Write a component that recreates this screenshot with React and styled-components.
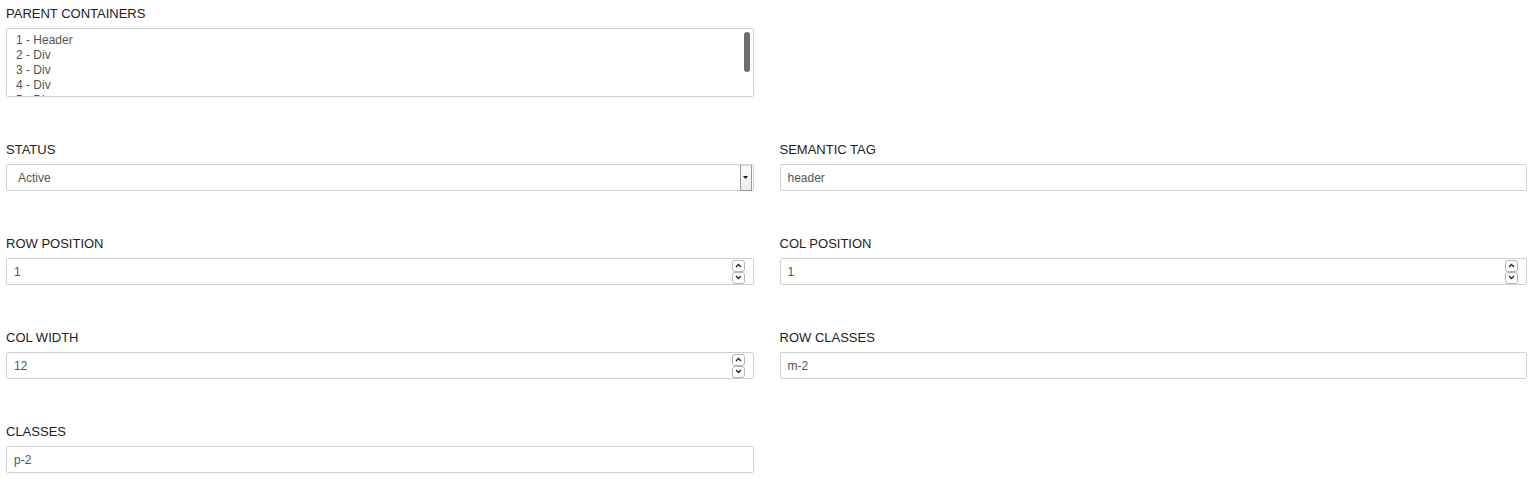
import React from 'react'
import styled, { createGlobalStyle } from 'styled-components'

const GlobalStyle = createGlobalStyle`
  html, body {
    margin: 0;
    padding: 0;
    background: #fff;
  }
  body {
    font-family: "Liberation Sans", Arial, sans-serif;
  }
`

const parents = ['1 - Header', '2 - Div', '3 - Div', '4 - Div', '5 - Div']

function NumberField({ value }) {
  return (
    <Box>
      <Value>{value}</Value>
      <Spinner>
        <SpinButton>
          <svg width="7" height="5" viewBox="0 0 7 5">
            <path d="M1 4 L3.5 1.5 L6 4" fill="none" stroke="#222" strokeWidth="1.3" />
          </svg>
        </SpinButton>
        <SpinButton>
          <svg width="7" height="5" viewBox="0 0 7 5">
            <path d="M1 1 L3.5 3.5 L6 1" fill="none" stroke="#222" strokeWidth="1.3" />
          </svg>
        </SpinButton>
      </Spinner>
    </Box>
  )
}

function App() {
  return (
    <>
      <GlobalStyle />
      <Form>
        <Field>
          <Label>Parent Containers</Label>
          <ListBox>
            <ListInner>
              {parents.map(p => (
                <ListItem key={p}>{p}</ListItem>
              ))}
            </ListInner>
            <ScrollThumb />
          </ListBox>
        </Field>
        <div />

        <Field>
          <Label>Status</Label>
          <Box>
            <Value extraCss="padding-left: 11px;">Active</Value>
            <DropButton>
              <svg width="5" height="3" viewBox="0 0 5 3">
                <path d="M0 0 H5 L2.5 3 Z" fill="#111" />
              </svg>
            </DropButton>
          </Box>
        </Field>
        <Field>
          <Label>Semantic Tag</Label>
          <Box>
            <Value>header</Value>
          </Box>
        </Field>

        <Field>
          <Label>Row Position</Label>
          <NumberField value="1" />
        </Field>
        <Field>
          <Label>Col Position</Label>
          <NumberField value="1" />
        </Field>

        <Field>
          <Label>Col Width</Label>
          <NumberField value="12" />
        </Field>
        <Field>
          <Label>Row Classes</Label>
          <Box>
            <Value>m-2</Value>
          </Box>
        </Field>

        <Field>
          <Label>Classes</Label>
          <Box>
            <Value>p-2</Value>
          </Box>
        </Field>
      </Form>
    </>
  )
}

const Form = styled.div`
  display: grid;
  grid-template-columns: 1fr 1fr;
  column-gap: 26px;
  row-gap: 44px;
  padding: 5px 6px 8px;
`

const Field = styled.div`
  display: flex;
  flex-direction: column;
`

const Label = styled.label`
  display: block;
  font-size: 13px;
  line-height: 16px;
  padding-top: 1px;
  color: #222;
  text-transform: uppercase;
  margin-bottom: 6px;
`

const ListBox = styled.div`
  position: relative;
  height: 67px;
  border: 1px solid #cdd1d6;
  border-radius: 2px;
  overflow: hidden;
  background: #fff;
`

const ListInner = styled.div`
  height: 100%;
  overflow: hidden;
  padding: 4px 0 0 9px;
  box-sizing: border-box;
`

const ScrollThumb = styled.div`
  position: absolute;
  top: 3px;
  right: 3px;
  width: 6px;
  height: 40px;
  border-radius: 3px;
  background: #6f6f6f;
`

const ListItem = styled.div`
  font-size: 12px;
  line-height: 15px;
  color: #555;
`

const Box = styled.div`
  height: 25px;
  border: 1px solid #cdd1d6;
  border-radius: 2px;
  display: flex;
  align-items: center;
  background: #fff;
`

const Value = styled.span`
  flex: 1;
  font-size: 12px;
  color: #555;
  padding-left: 7px;
  ${props => props.extraCss}
`

const DropButton = styled.div`
  width: 10px;
  height: 24px;
  margin-right: 1px;
  border: 1px solid #9a9a9a;
  border-top-color: #d0d0d0;
  background: linear-gradient(#fafafa, #ececec);
  display: flex;
  align-items: center;
  justify-content: center;
`

const Spinner = styled.div`
  display: flex;
  flex-direction: column;
  margin-right: 8px;
`

const SpinButton = styled.div`
  width: 11px;
  height: 10px;
  border: 1px solid #b5b5b5;
  border-radius: 3px;
  display: flex;
  align-items: center;
  justify-content: center;
  background: #fff;
`

export default App
